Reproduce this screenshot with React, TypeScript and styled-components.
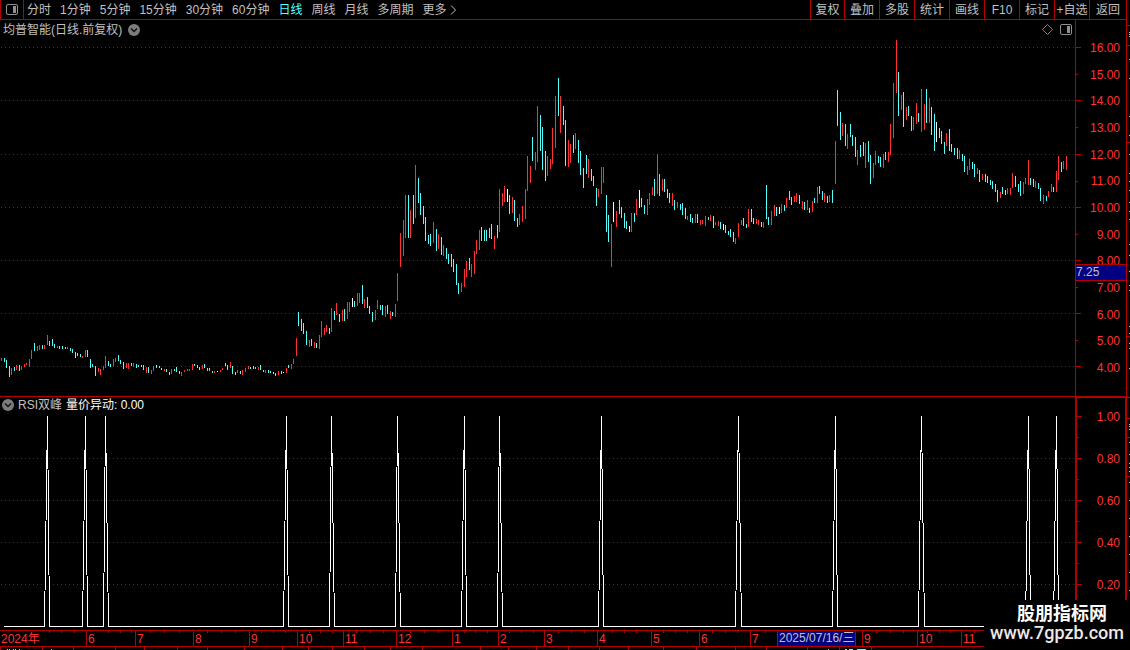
import React from "react";
import styled, { createGlobalStyle } from "styled-components";

const RED = "#b40000";
const BRIGHT_RED = "#ff3232";
const CYAN = "#54ffff";
const GREY = "#c0c0c0";

/* Each bar: x, high, low, kind (r = up, c = down, w = unchanged). */
const BARS = `
1,358,361,r 4,358,362,c 6,360,368,c 9,366,377,c 11,368,375,r 14,367,371,c 16,365,370,r 19,365,371,c 21,366,370,r
24,364,367,r 26,363,365,r 29,359,367,r 31,350,359,r 34,343,351,c 37,346,351,r 39,345,350,r 42,345,349,c 44,345,349,r
47,335,345,r 49,341,346,c 52,339,346,c 54,344,348,c 57,346,348,r 59,346,349,c 62,346,349,c 65,347,349,c 67,347,349,r
70,348,351,c 72,349,353,c 75,352,358,c 77,353,356,c 80,354,357,c 82,356,358,r 85,350,357,r 87,350,357,c 90,359,368,c
92,364,367,c 95,366,376,c 98,368,372,r 100,369,375,r 103,366,370,r 105,356,368,r 108,361,366,c 110,364,367,c
113,359,366,r 115,358,362,r 118,355,361,c 120,360,364,c 123,362,369,c 126,363,368,r 128,363,369,r 131,363,366,c
133,363,367,r 136,364,368,c 138,365,367,c 141,365,367,c 143,365,370,c 146,367,373,r 148,367,373,c 151,370,374,r
153,366,371,r 156,365,368,c 159,366,368,c 161,368,370,c 164,369,371,r 166,369,372,c 169,372,375,c 171,369,374,r
174,369,371,c 176,367,372,c 179,371,374,c 181,372,376,r 184,370,372,r 187,369,371,r 189,369,371,r 192,364,370,r
194,364,366,c 197,365,368,c 199,367,370,c 202,365,369,r 204,364,368,c 207,368,371,c 209,368,371,c 212,371,373,c
214,371,373,r 217,371,372,w 220,370,372,r 222,368,370,r 225,363,366,c 227,365,370,c 230,362,368,r 232,366,374,c
235,372,375,c 237,370,373,r 240,371,374,c 242,370,375,r 245,368,372,r 248,366,369,r 250,367,369,c 253,366,369,c
255,367,369,c 258,367,370,r 260,365,370,c 263,370,372,c 265,370,373,r 268,370,373,c 270,371,373,c 273,372,374,c
275,373,376,c 278,371,375,r 281,371,374,c 283,372,373,w 286,368,373,r 288,365,368,c 291,364,369,r 293,359,364,r
296,338,356,r 298,312,326,c 301,319,331,c 303,323,334,c 306,331,345,c 309,340,347,r 311,339,346,c 314,342,348,r
316,343,348,c 319,335,349,r 321,321,337,r 324,328,335,r 326,325,332,r 329,328,334,c 331,308,332,r 334,311,320,c
336,303,315,r 339,314,322,c 342,310,321,r 344,309,321,c 347,302,319,r 349,302,312,r 352,298,307,w 354,301,307,c
357,293,306,r 359,293,303,r 362,285,304,c 364,299,308,r 367,297,308,c 369,306,314,c 372,312,322,c 375,310,320,r
377,300,309,r 380,305,310,c 382,305,315,c 385,306,317,r 387,305,314,c 390,311,319,r 392,312,316,c 395,304,317,r
397,273,301,r 400,233,267,r 403,220,256,r 405,195,238,r 408,195,238,c 410,210,238,r 413,195,224,c 415,165,218,r
418,178,203,c 420,193,215,c 423,206,224,c 425,217,241,c 428,235,244,c 430,234,246,c 433,222,243,r 436,229,251,c
438,234,249,r 441,237,255,c 443,245,256,r 446,248,259,c 448,254,264,c 451,254,267,c 453,259,272,c 456,264,285,c
458,283,294,c 461,283,292,r 464,269,287,r 466,261,277,r 469,258,270,c 471,264,277,r 474,251,274,r 476,240,254,r
479,230,250,r 481,227,241,c 484,230,241,c 486,230,241,c 489,228,238,c 491,224,239,c 494,236,249,r 497,225,238,c
499,189,232,r 502,193,206,r 504,186,202,r 507,189,202,w 509,195,214,c 512,197,213,r 514,200,221,c 517,218,227,c
519,214,225,r 522,206,222,r 525,189,219,r 527,156,191,r 530,166,183,r 532,137,161,c 535,152,170,r 537,106,162,r
540,115,151,c 542,127,170,c 545,151,181,c 547,156,176,r 550,159,169,r 552,128,164,r 555,96,148,r 558,78,116,c
560,96,133,r 563,106,125,c 565,120,166,c 568,140,167,r 570,144,163,r 573,135,153,c 575,133,149,r 578,140,163,c
580,151,175,c 583,168,188,c 586,155,174,c 588,159,178,r 591,169,181,c 593,176,186,c 596,188,206,c 598,189,197,r
601,167,194,r 603,167,183,r 606,195,232,c 608,215,242,c 611,224,267,r 613,202,222,w 616,211,227,r 619,200,214,c
621,207,218,c 624,213,228,c 626,221,229,c 629,226,232,w 631,213,232,r 634,213,222,c 636,199,215,r 639,190,208,w
641,198,207,c 644,205,214,c 647,199,215,r 649,193,205,r 652,187,195,r 654,179,196,c 657,154,194,r 659,174,196,c
662,179,191,r 664,179,192,c 667,189,198,c 669,193,203,c 672,193,206,r 674,200,210,c 677,202,208,r 680,204,210,c
682,203,215,c 685,208,219,c 687,216,220,r 690,214,222,c 692,218,223,c 695,214,223,r 697,214,223,c 700,220,225,r
702,220,224,r 705,216,226,r 708,217,220,c 710,215,221,r 713,216,228,c 715,222,225,r 718,221,226,r 720,222,229,c
723,224,230,w 725,225,233,c 728,231,235,c 730,229,237,c 733,232,242,c 735,238,244,r 738,223,237,r 741,220,225,r
743,218,226,c 746,224,228,c 748,209,227,r 751,209,222,c 753,218,224,c 756,219,224,r 758,220,225,r 761,222,227,c
763,222,228,r 766,185,219,c 768,217,225,c 771,211,225,r 774,205,216,r 776,207,216,c 779,207,214,w 781,204,213,r
784,205,211,c 786,198,208,r 789,191,200,c 791,197,205,c 794,196,202,r 796,193,202,r 799,195,204,c 802,201,209,r
804,202,210,c 807,200,210,r 809,208,213,c 812,201,212,r 814,198,203,c 817,187,203,r 819,186,194,c 822,191,200,c
824,193,202,r 827,196,203,c 829,195,202,r 832,190,203,c 835,141,184,r 837,90,126,c 840,112,140,c 842,123,136,r
845,124,146,c 847,134,149,r 850,124,137,c 852,135,146,c 855,137,157,c 857,150,165,r 860,145,157,c 863,142,156,c
865,143,168,r 868,141,162,c 870,155,184,c 873,163,178,r 875,151,165,r 878,156,163,c 880,157,167,c 883,154,168,r
885,152,160,c 888,152,162,r 890,124,155,r 893,83,138,r 896,40,93,r 898,72,116,c 901,95,110,r 903,92,127,c
906,107,120,r 908,106,116,c 911,116,131,c 913,117,130,r 916,103,124,r 918,113,122,c 921,89,132,r 924,104,130,r
926,89,123,c 929,98,123,r 931,107,135,c 934,114,151,c 936,122,142,w 939,128,138,c 941,131,144,c 944,142,154,c
946,133,146,r 949,129,151,c 951,144,152,c 954,148,155,c 957,148,159,c 959,150,159,r 962,154,161,c 964,156,172,c
967,166,175,r 969,159,170,r 972,162,169,c 974,164,177,c 977,168,174,r 979,170,182,c 982,174,180,r 985,174,182,c
987,176,183,c 990,180,185,c 992,181,189,c 995,184,192,c 997,190,202,c 1000,192,198,r 1002,187,194,c 1005,190,195,c
1007,188,194,r 1010,188,195,r 1012,173,188,r 1015,176,187,c 1018,184,192,c 1020,181,196,c 1023,182,194,r
1025,178,184,r 1028,160,185,r 1030,178,185,c 1033,179,187,c 1035,181,188,r 1038,183,189,c 1040,188,201,c
1043,195,204,r 1046,196,201,c 1048,191,197,r 1051,184,192,r 1053,187,192,c 1056,171,192,r 1058,156,180,r
1061,162,172,c 1063,161,169,r 1066,156,170,r`
  .trim()
  .split(/\s+/)
  .map((entry) => {
    const [x, high, low, kind] = entry.split(",");
    return { x: Number(x), high: Number(high), low: Number(low), kind };
  });

const BAR_COLOURS: Record<string, string> = { r: BRIGHT_RED, c: CYAN, w: "#ffffff" };

/* Each signal: foot before, peak, foot after. */
const SIGNALS = [
  [44, 47, 49], [82, 85, 87], [103, 105, 108], [283, 286, 288], [329, 331, 334],
  [395, 397, 400], [461, 464, 466], [497, 499, 502], [598, 601, 603], [735, 738, 741],
  [832, 835, 837], [918, 921, 924], [1025, 1028, 1030], [1053, 1056, 1058],
];

const PERIODS = ["分时", "1分钟", "5分钟", "15分钟", "30分钟", "60分钟", "日线", "周线", "月线", "多周期"];

const TOOLS = [
  { label: "复权", width: 34 },
  { label: "叠加", width: 35 },
  { label: "多股", width: 35 },
  { label: "统计", width: 35 },
  { label: "画线", width: 35 },
  { label: "F10", width: 35 },
  { label: "标记", width: 35 },
  { label: "+自选", width: 35 },
  { label: "返回", width: 37 },
];

const PRICES = ["16.00", "15.00", "14.00", "13.00", "12.00", "11.00", "10.00", "9.00", "8.00", "7.00", "6.00", "5.00", "4.00"];
const PRICE_LINES = [47, 100, 154, 207, 260, 313, 366];
const PRICE_MINOR = [74, 127, 181, 234, 287, 340];
const LEVELS = ["1.00", "0.80", "0.60", "0.40", "0.20"];
const LEVEL_TICKS = [416, 458, 500, 542, 584];
const LEVEL_MINOR = [437, 479, 521, 563];

const MONTHS = [
  { label: "2024年", span: 86 },
  { label: "6", span: 49 },
  { label: "7", span: 58 },
  { label: "8", span: 56 },
  { label: "9", span: 48 },
  { label: "10", span: 46 },
  { label: "11", span: 53 },
  { label: "12", span: 56 },
  { label: "1", span: 46 },
  { label: "2", span: 46 },
  { label: "3", span: 53 },
  { label: "4", span: 54 },
  { label: "5", span: 48 },
  { label: "6", span: 51 },
  { label: "7", span: 112, selected: "2025/07/16/三" },
  { label: "9", span: 55 },
  { label: "10", span: 44 },
  { label: "11", span: 166 },
];
const MONTH_COLUMNS = MONTHS.map((month) => `minmax(0, ${month.span}fr)`).join(" ");
const WEEK_TICKS = [
  49, 61, 74, 108, 120, 131, 150, 164, 179, 207, 221, 235, 261, 273, 285, 309, 320, 332, 356, 370, 383,
  410, 424, 438, 464, 475, 487, 509, 521, 533, 558, 571, 584, 612, 624, 636, 663, 675, 687, 712, 725, 737,
  765, 876, 890, 903, 927, 939, 950, 974,
];
const TAB_EDGES = [
  0, 42, 73, 115, 144, 177, 207, 244, 282, 308, 332, 364, 390, 422, 480, 508, 536, 568, 599, 628, 663, 696,
  735, 766, 807, 839, 871,
];
const EDGE_LINES = [25, 45, 142, 336, 397, 418, 437, 476];
const EDGE_MARKS = [
  32, 34, 36, 59, 78, 116, 135, 154, 173, 181, 190, 202, 211, 219, 244, 255, 271, 285, 290, 326, 333, 343,
  348, 368, 424, 426, 429, 442, 454, 463, 467, 471, 482, 500, 518, 536, 554, 572, 590,
];

const GlobalStyle = createGlobalStyle`
  * { box-sizing: border-box; }
  body {
    margin: 0;
    background: #000000;
    color: ${GREY};
    font: 12px/14px "Liberation Sans", "Noto Sans CJK SC", sans-serif;
  }
`;

const Screen = styled.div`
  position: relative;
  display: flex;
  overflow: hidden;
`;

const Terminal = styled.main`
  flex: 1;
  min-width: 0;
`;

const Toolbar = styled.nav`
  display: flex;
  justify-content: space-between;
  height: 20px;
  border-right: 1px solid ${RED};
  border-bottom: 1px solid ${RED};
`;

const ToolGroup = styled.div`
  display: flex;
`;

const PeriodList = styled.div`
  display: flex;
  gap: 9px;
  padding-left: 3px;
`;

const BarButton = styled.button`
  display: flex;
  align-items: center;
  justify-content: center;
  gap: 3px;
  padding: 0;
  border: 0;
  background: none;
  color: inherit;
  font: inherit;
  white-space: nowrap;
`;

const PeriodButton = styled(BarButton)<{ $active?: boolean }>`
  color: ${(p) => (p.$active ? CYAN : GREY)};
`;

const LayoutButton = styled(BarButton)`
  width: 24px;
  border: solid ${RED};
  border-width: 0 1px;
`;

const ToolButton = styled(BarButton)<{ $width: number }>`
  width: ${(p) => p.$width}px;
  border-left: 1px solid ${RED};
`;

const Panel = styled.section`
  display: grid;
  grid-template-columns: minmax(0, 1fr) 52px;
`;

const PriceBody = styled.div`
  min-width: 0;
`;

const IndicatorBody = styled.div`
  min-width: 0;
  border-top: 1px solid ${RED};
`;

const PriceHeader = styled.header`
  display: flex;
  align-items: center;
  justify-content: space-between;
  height: 20px;
  padding: 0 3px 1px;
`;

const Title = styled.h1`
  display: flex;
  align-items: center;
  gap: 6px;
  margin: 0;
  font: inherit;
`;

const HeaderTools = styled.div`
  display: flex;
  align-items: center;
  gap: 7px;
`;

const IndicatorHeader = styled.header`
  display: flex;
  align-items: center;
  gap: 4px;
  height: 17px;
  padding: 0 0 1px 2px;
`;

const Reading = styled.span`
  color: #ffffff;
`;

const Plot = styled.svg<{ $height: number }>`
  display: block;
  width: 100%;
  height: ${(p) => p.$height}px;
`;

const PriceAxis = styled.aside`
  position: relative;
  display: flex;
  border: solid ${RED};
  border-width: 0 1px;
`;

const IndicatorAxis = styled.aside`
  display: flex;
  border: solid ${RED};
  border-width: 2px 2px 0;
`;

const Ticks = styled.svg`
  display: block;
  flex: none;
`;

const Scale = styled.div<{ $top: number; $right: number; $bottom: number }>`
  flex: 1;
  display: flex;
  flex-direction: column;
  justify-content: space-between;
  align-items: flex-end;
  padding: ${(p) => p.$top}px ${(p) => p.$right}px ${(p) => p.$bottom}px 0;
  color: ${BRIGHT_RED};
`;

const PriceTag = styled.div`
  position: absolute;
  top: 244px;
  left: 0;
  right: 0;
  height: 17px;
  border: solid ${RED};
  border-width: 1px 0;
  background: #000080;
`;

const DateAxis = styled.div`
  position: relative;
  display: grid;
  grid-template-columns: ${MONTH_COLUMNS};
  height: 17px;
  border: solid ${RED};
  border-width: 1px 0;
`;

const WeekTicks = styled.svg`
  position: absolute;
  top: 0;
  left: 0;
  width: 100%;
  height: 2px;
`;

const Month = styled.div`
  position: relative;
  padding: 1px 0 0 1px;
  border-left: 1px solid ${RED};
  color: ${BRIGHT_RED};
  white-space: nowrap;

  &:first-of-type {
    border-left: 0;
  }
`;

const SelectedDate = styled.time`
  position: absolute;
  top: 0;
  left: 26px;
  height: 15px;
  padding: 0 1px;
  border: solid ${RED};
  border-width: 0 1px;
  background: #000080;
  color: ${GREY};
`;

const Watermark = styled.div`
  position: absolute;
  right: 0;
  bottom: 0;
  display: flex;
  flex-direction: column;
  align-items: center;
  width: 146px;
  height: 50px;
  padding-top: 4px;
  background: #000000;
  color: #ffffff;
`;

const SiteName = styled.div`
  padding-left: 10px;
  font: bold 18px/20px "Liberation Sans", "Noto Sans CJK SC", sans-serif;
`;

const SiteAddress = styled.div`
  color: #f0e8e8;
  font: 500 18px/18px Roboto, sans-serif;
`;

function LayoutIcon() {
  return (
    <svg width="12" height="11" viewBox="0 0 12 11" aria-hidden="true">
      <rect x="0.5" y="0.5" width="11" height="10" rx="1.5" fill="none" stroke="#909090" />
      <rect x="7" y="2" width="3" height="7" fill="#909090" />
    </svg>
  );
}

function DiamondIcon() {
  return (
    <svg width="11" height="11" viewBox="0 0 11 11" aria-hidden="true">
      <path d="M5.5 0.5 10.5 5.5 5.5 10.5 0.5 5.5Z" fill="none" stroke="#808080" />
    </svg>
  );
}

function MenuDot() {
  return (
    <svg width="12" height="12" viewBox="0 0 12 12" aria-hidden="true">
      <circle cx="6" cy="6" r="6" fill="#7c7c7c" />
      <path d="M3 4.5 6 7.5 9 4.5" fill="none" stroke="#101010" strokeWidth="1.5" />
    </svg>
  );
}

function GridLine({ y }: { y: number }) {
  return <line x1="1" x2="1075" y1={y + 0.5} y2={y + 0.5} stroke={RED} strokeDasharray="1 3" />;
}

function AxisTicks({ top, height, major, minor }: { top: number; height: number; major: number[]; minor: number[] }) {
  return (
    <Ticks width="5" height={height} viewBox={`0 ${top} 5 ${height}`} shapeRendering="crispEdges" aria-hidden="true">
      {major.map((y) => (
        <rect key={y} x="0" y={y} width="5" height="1" fill={RED} />
      ))}
      {minor.map((y) => (
        <rect key={y} x="0" y={y} width="2" height="1" fill={RED} />
      ))}
    </Ticks>
  );
}

const signalPoints = [
  "4,626.5",
  ...SIGNALS.map(([a, b, c]) => `${a + 0.5},626.5 ${b + 0.5},416 ${c + 0.5},626.5`),
  "1066,626.5",
].join(" ");

export default function App() {
  return (
    <>
      <GlobalStyle />
      <Screen>
        <Terminal>
          <Toolbar aria-label="周期">
            <ToolGroup>
              <LayoutButton type="button" aria-label="布局">
                <LayoutIcon />
              </LayoutButton>
              <PeriodList>
                {PERIODS.map((label) => (
                  <PeriodButton key={label} type="button" $active={label === "日线"}>
                    {label}
                  </PeriodButton>
                ))}
                <PeriodButton type="button">
                  更多
                  <svg width="7" height="10" viewBox="0 0 7 10" aria-hidden="true">
                    <path d="M1 0.5 5.5 5 1 9.5" fill="none" stroke={GREY} />
                  </svg>
                </PeriodButton>
              </PeriodList>
            </ToolGroup>
            <ToolGroup>
              {TOOLS.map((tool) => (
                <ToolButton key={tool.label} type="button" $width={tool.width}>
                  {tool.label}
                </ToolButton>
              ))}
            </ToolGroup>
          </Toolbar>

          <Panel>
            <PriceBody>
              <PriceHeader>
                <Title>
                  均普智能(日线.前复权)
                  <BarButton type="button" aria-label="菜单">
                    <MenuDot />
                  </BarButton>
                </Title>
                <HeaderTools>
                  <BarButton type="button" aria-label="标记点">
                    <DiamondIcon />
                  </BarButton>
                  <BarButton type="button" aria-label="侧栏">
                    <LayoutIcon />
                  </BarButton>
                </HeaderTools>
              </PriceHeader>
              <Plot
                $height={356}
                viewBox="0 40 1075 356"
                preserveAspectRatio="none"
                shapeRendering="crispEdges"
                role="img"
                aria-label="日线"
              >
                {PRICE_LINES.map((y) => (
                  <GridLine key={y} y={y} />
                ))}
                {BARS.map((bar) => (
                  <rect
                    key={bar.x}
                    x={bar.x}
                    y={bar.high}
                    width="1"
                    height={bar.low - bar.high}
                    fill={BAR_COLOURS[bar.kind]}
                  />
                ))}
              </Plot>
            </PriceBody>
            <PriceAxis>
              <AxisTicks top={20} height={376} major={PRICE_LINES} minor={PRICE_MINOR} />
              <Scale $top={21} $right={6} $bottom={21}>
                {PRICES.map((price) => (
                  <span key={price}>{price}</span>
                ))}
              </Scale>
              <PriceTag>7.25</PriceTag>
            </PriceAxis>
          </Panel>

          <Panel>
            <IndicatorBody>
              <IndicatorHeader>
                <BarButton type="button" aria-label="指标菜单">
                  <MenuDot />
                </BarButton>
                <span>RSI双峰</span>
                <Reading>量价异动: 0.00</Reading>
              </IndicatorHeader>
              <Plot
                $height={216}
                viewBox="0 414 1075 216"
                preserveAspectRatio="none"
                shapeRendering="crispEdges"
                role="img"
                aria-label="量价异动"
              >
                {LEVEL_TICKS.slice(1).map((y) => (
                  <GridLine key={y} y={y} />
                ))}
                <polyline points={signalPoints} fill="none" stroke="#ffffff" strokeLinejoin="bevel" />
              </Plot>
            </IndicatorBody>
            <IndicatorAxis>
              <AxisTicks top={398} height={232} major={LEVEL_TICKS} minor={LEVEL_MINOR} />
              <Scale $top={12} $right={5} $bottom={38}>
                {LEVELS.map((level) => (
                  <span key={level}>{level}</span>
                ))}
              </Scale>
            </IndicatorAxis>
          </Panel>

          <DateAxis>
            <WeekTicks viewBox="0 0 1127 2" preserveAspectRatio="none" shapeRendering="crispEdges" aria-hidden="true">
              {WEEK_TICKS.map((x) => (
                <rect key={x} x={x} y="0" width="1" height="2" fill={RED} />
              ))}
            </WeekTicks>
            {MONTHS.map((month, index) => (
              <Month key={index}>
                {month.label}
                {month.selected && <SelectedDate>{month.selected}</SelectedDate>}
              </Month>
            ))}
          </DateAxis>
          <Plot $height={3} viewBox="0 0 1127 3" preserveAspectRatio="none" shapeRendering="crispEdges" aria-hidden="true">
            {TAB_EDGES.map((x) => (
              <rect key={x} x={x} y="0" width="1" height="3" fill={RED} />
            ))}
            {[7, 9, 13, 15, 19, 51, 828].map((x) => (
              <rect key={x} x={x} y="2" width="1" height="1" fill={GREY} />
            ))}
            <path d="M845 2h2v1h-2zM849 2h4v1h-4zM857 2h9v1h-9z" fill={CYAN} />
          </Plot>
        </Terminal>

        <Ticks width="3" height="650" viewBox="0 0 3 650" shapeRendering="crispEdges" aria-hidden="true">
          {EDGE_LINES.map((y) => (
            <rect key={y} x="0" y={y} width="3" height="1" fill={RED} />
          ))}
          {EDGE_MARKS.map((y) => (
            <rect key={y} x="2" y={y} width="1" height="1" fill={GREY} />
          ))}
        </Ticks>

        <Watermark>
          <SiteName>股朋指标网</SiteName>
          <SiteAddress>www.7gpzb.com</SiteAddress>
        </Watermark>
      </Screen>
    </>
  );
}
